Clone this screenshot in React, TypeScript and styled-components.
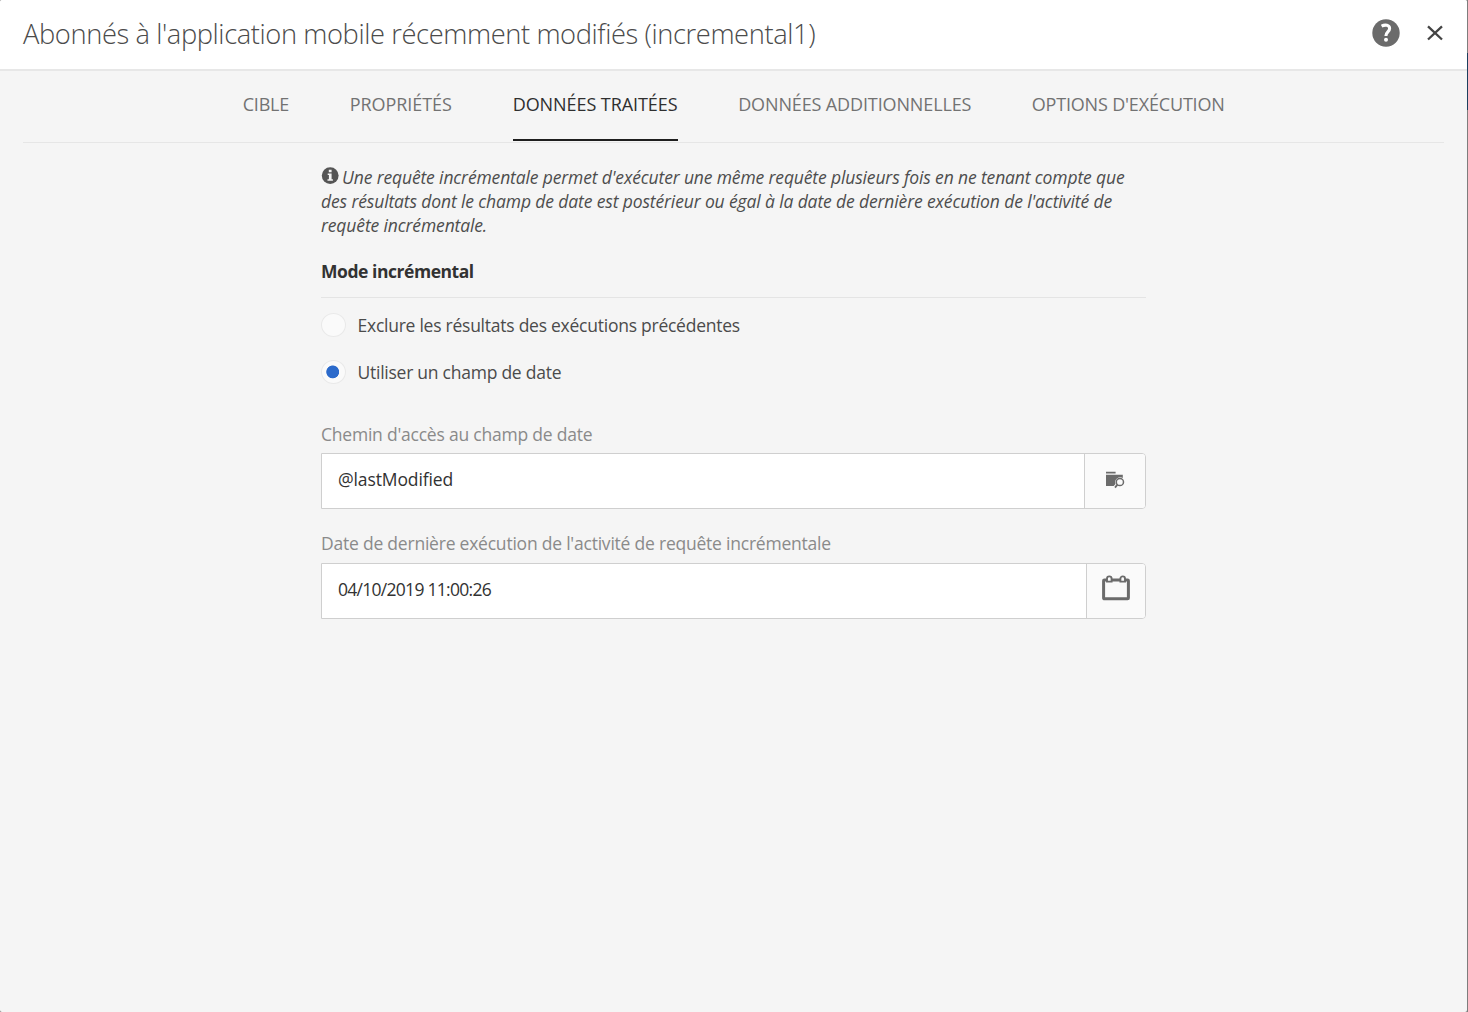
import React, { useState } from 'react';
import styled, { createGlobalStyle } from 'styled-components';

const GlobalStyle = createGlobalStyle`
  *, *::before, *::after { box-sizing: border-box; }
  body { margin: 0; background: #7d7d7d; }
  button, input { font: inherit; color: inherit; }
`;

const Page = styled.div`
  display: grid;
  grid-template-columns: 1467px 1px;
  height: 1012px;
  overflow: hidden;
  font-family: 'Open Sans', 'Noto Sans', sans-serif;
  font-size: 17.5px;
  color: #4b4b4b;
`;

const Dialog = styled.main`
  display: flex;
  flex-direction: column;
  background: #f5f5f5;
  border-radius: 2px;
  overflow: hidden;
`;

const Backdrop = styled.div`
  background: linear-gradient(#7d7d7d 53px, #1c3f5e 53px, #1c3f5e 110px, #7d7d7d 110px);
`;

const Header = styled.header`
  display: flex;
  align-items: center;
  height: 71px;
  padding: 0 23px 3px;
  background: #fff;
  border-bottom: 2px solid #e7e7e7;
`;

const Title = styled.h1`
  flex: 1;
  margin: 0;
  padding-top: 2px;
  font-size: 27.3px;
  font-weight: 300;
  line-height: 36px;
  letter-spacing: -0.4px;
  white-space: nowrap;
`;

const IconButton = styled.button`
  display: flex;
  padding: 0;
  border: 0;
  background: none;
  & + & { margin-left: 26px; }
`;

const TabBar = styled.nav`
  display: flex;
  justify-content: flex-start;
  gap: 60.5px;
  height: 72px;
  margin: 0 23px;
  padding-left: 219.7px;
  border-bottom: 1px solid #e6e6e6;
`;

const Tab = styled.button<{ $active: boolean; $width: number; $tracking: number }>`
  width: ${p => p.$width}px;
  height: 70.4px;
  padding: 0 0 2px;
  border: 0;
  border-bottom: 2px solid ${p => (p.$active ? '#1e1e1e' : 'transparent')};
  background: none;
  color: ${p => (p.$active ? '#2f2f2f' : '#727272')};
  font-size: 18px;
  line-height: 65px;
  letter-spacing: ${p => p.$tracking}px;
  text-align: left;
  white-space: nowrap;
`;

const Content = styled.section`
  width: 825px;
  margin-left: 321px;
`;

const Notice = styled.p`
  margin: 22px 0 0;
  font-style: italic;
  line-height: 24px;
  color: #4d4d4d;
`;

const NoticeLine = styled.span<{ $tracking: number }>`
  display: flex;
  letter-spacing: ${p => p.$tracking}px;
  white-space: nowrap;
  svg { margin: 1.5px 3px 0 0; flex: none; }
`;

const SectionTitle = styled.h2`
  height: 61px;
  margin: 0;
  padding-top: 22px;
  border-bottom: 1px solid #e4e4e4;
  color: #323232;
  font-size: 17.5px;
  font-weight: 700;
  line-height: 24px;
  letter-spacing: -0.45px;
`;

const RadioGroup = styled.div`
  display: flex;
  flex-direction: column;
  gap: 23px;
  margin-top: 15px;
`;

const RadioLabel = styled.label`
  display: flex;
  align-items: center;
  gap: 11.5px;
  height: 24px;
  line-height: 24px;
  letter-spacing: -0.25px;
`;

const Radio = styled.input`
  appearance: none;
  width: 25px;
  height: 24px;
  margin: 0;
  border: 1px solid #e9e9e9;
  border-radius: 50%;
  background: #fafafa;
  &:checked {
    background: radial-gradient(circle at 10.7px 10.9px, #2b6acb 6px, #fafafa 6.8px);
  }
`;

const Field = styled.div<{ $top: number }>`
  margin-top: ${p => p.$top}px;
`;

const FieldLabel = styled.label<{ $space: number }>`
  display: block;
  margin-bottom: ${p => p.$space}px;
  color: #8a8a8a;
  line-height: 24px;
  letter-spacing: -0.22px;
`;

const InputGroup = styled.div`
  display: flex;
  height: 55.5px;
  border: 1px solid #cfcfcf;
  border-radius: 0 4px 4px 0;
  background: #fff;
  overflow: hidden;
`;

const TextInput = styled.input<{ $tracking: number }>`
  flex: 1;
  min-width: 0;
  padding: 0 16px 4px;
  border: 0;
  outline: 0;
  background: none;
  color: #323232;
  letter-spacing: ${p => p.$tracking}px;
`;

const PickerButton = styled.button<{ $width: number; $lift?: number }>`
  display: flex;
  align-items: center;
  justify-content: center;
  width: ${p => p.$width}px;
  padding: 0 0 ${p => p.$lift ?? 0}px;
  border: 0;
  border-left: 1px solid #cfcfcf;
  background: #fafafa;
`;

const HelpIcon = () => (
  <svg width="28" height="28" viewBox="0 0 28 28" fill="none">
    <circle cx="14" cy="14" r="13.7" fill="#6b6b6b" />
    <path d="M9.6 7.2c3.6-2 8-1.2 8 2.3 0 3.4-3.7 3.5-3.7 7.4" stroke="#fff" strokeWidth="3.1" />
    <circle cx="14" cy="20.8" r="2" fill="#fff" />
  </svg>
);

const CloseIcon = () => (
  <svg width="18" height="18" viewBox="0 0 18 18" fill="none" stroke="#444" strokeWidth="2.3">
    <path d="M2 2.3 16 15.5M16 2.3 2 15.5" />
  </svg>
);

const InfoIcon = () => (
  <svg width="18" height="18" viewBox="0 0 18 18">
    <circle cx="9.2" cy="8.6" r="8.4" fill="#555" />
    <path d="M7.8 2.7h2.8v2.5H7.8zM6.7 6.5h3.9v5.7h1.3v1.6H6.5v-1.6h1.4V8.1H6.7z" fill="#f4f4f4" />
  </svg>
);

const FolderSearchIcon = () => (
  <svg width="20" height="18" viewBox="0 0 20 18">
    <path d="M1 .8h9.6v1.8H1zM1 3.7h16.8v3.2a5.1 5.1 0 0 0-7.3 6.2l-1.8 2H1z" fill="#6b6b6b" />
    <circle cx="14.9" cy="11" r="3.6" fill="#fafafa" stroke="#6b6b6b" strokeWidth="1.5" />
    <path d="m12.4 13.6-2.4 3" stroke="#6b6b6b" strokeWidth="1.8" />
  </svg>
);

const CalendarIcon = () => (
  <svg width="28" height="26" viewBox="0 0 28 26" fill="none" stroke="#6b6b6b">
    <rect x="1.6" y="5" width="24.8" height="18.8" rx=".8" strokeWidth="3" />
    <path
      d="M5 6.6V3.7a2.3 2.3 0 0 1 4.6 0V6.6zM18.4 6.6V3.7a2.3 2.3 0 0 1 4.6 0V6.6z"
      fill="#fafafa"
      strokeWidth="1.9"
    />
  </svg>
);

const tabs = [
  { label: 'CIBLE', width: 46.5, tracking: -0.2 },
  { label: 'PROPRIÉTÉS', width: 102.5, tracking: -0.05 },
  { label: 'DONNÉES TRAITÉES', width: 165, tracking: -0.07 },
  { label: 'DONNÉES ADDITIONNELLES', width: 233, tracking: -0.13 },
  { label: "OPTIONS D'EXÉCUTION", width: 193, tracking: -0.17 },
];

const modes = ['Exclure les résultats des exécutions précédentes', 'Utiliser un champ de date'];

export default function App() {
  const [activeTab, setActiveTab] = useState(2);
  const [mode, setMode] = useState(1);
  const [path, setPath] = useState('@lastModified');
  const [date, setDate] = useState('04/10/2019 11:00:26');

  return (
    <>
      <GlobalStyle />
      <Page>
        <Dialog>
          <Header>
            <Title>Abonnés à l'application mobile récemment modifiés (incremental1)</Title>
            <IconButton aria-label="Aide"><HelpIcon /></IconButton>
            <IconButton aria-label="Fermer"><CloseIcon /></IconButton>
          </Header>
          <TabBar>
            {tabs.map((tab, i) => (
              <Tab
                key={tab.label}
                $active={i === activeTab}
                $width={tab.width}
                $tracking={tab.tracking}
                onClick={() => setActiveTab(i)}
              >
                {tab.label}
              </Tab>
            ))}
          </TabBar>
          <Content>
            <Notice>
              <NoticeLine $tracking={-0.14}>
                <InfoIcon />
                Une requête incrémentale permet d'exécuter une même requête plusieurs fois en ne tenant compte que
              </NoticeLine>
              <NoticeLine $tracking={-0.13}>
                des résultats dont le champ de date est postérieur ou égal à la date de dernière exécution de l'activité de
              </NoticeLine>
              <NoticeLine $tracking={-0.13}>requête incrémentale.</NoticeLine>
            </Notice>
            <SectionTitle>Mode incrémental</SectionTitle>
            <RadioGroup>
              {modes.map((label, i) => (
                <RadioLabel key={label}>
                  <Radio type="radio" name="mode" checked={mode === i} onChange={() => setMode(i)} />
                  {label}
                </RadioLabel>
              ))}
            </RadioGroup>
            <Field $top={38}>
              <FieldLabel htmlFor="path" $space={7}>Chemin d'accès au champ de date</FieldLabel>
              <InputGroup>
                <TextInput id="path" $tracking={-0.12} value={path} onChange={e => setPath(e.target.value)} />
                <PickerButton $width={61} $lift={1} aria-label="Parcourir"><FolderSearchIcon /></PickerButton>
              </InputGroup>
            </Field>
            <Field $top={22.5}>
              <FieldLabel htmlFor="date" $space={8}>
                Date de dernière exécution de l'activité de requête incrémentale
              </FieldLabel>
              <InputGroup>
                <TextInput id="date" $tracking={-0.72} value={date} onChange={e => setDate(e.target.value)} />
                <PickerButton $width={59} $lift={5} aria-label="Calendrier"><CalendarIcon /></PickerButton>
              </InputGroup>
            </Field>
          </Content>
        </Dialog>
        <Backdrop />
      </Page>
    </>
  );
}
